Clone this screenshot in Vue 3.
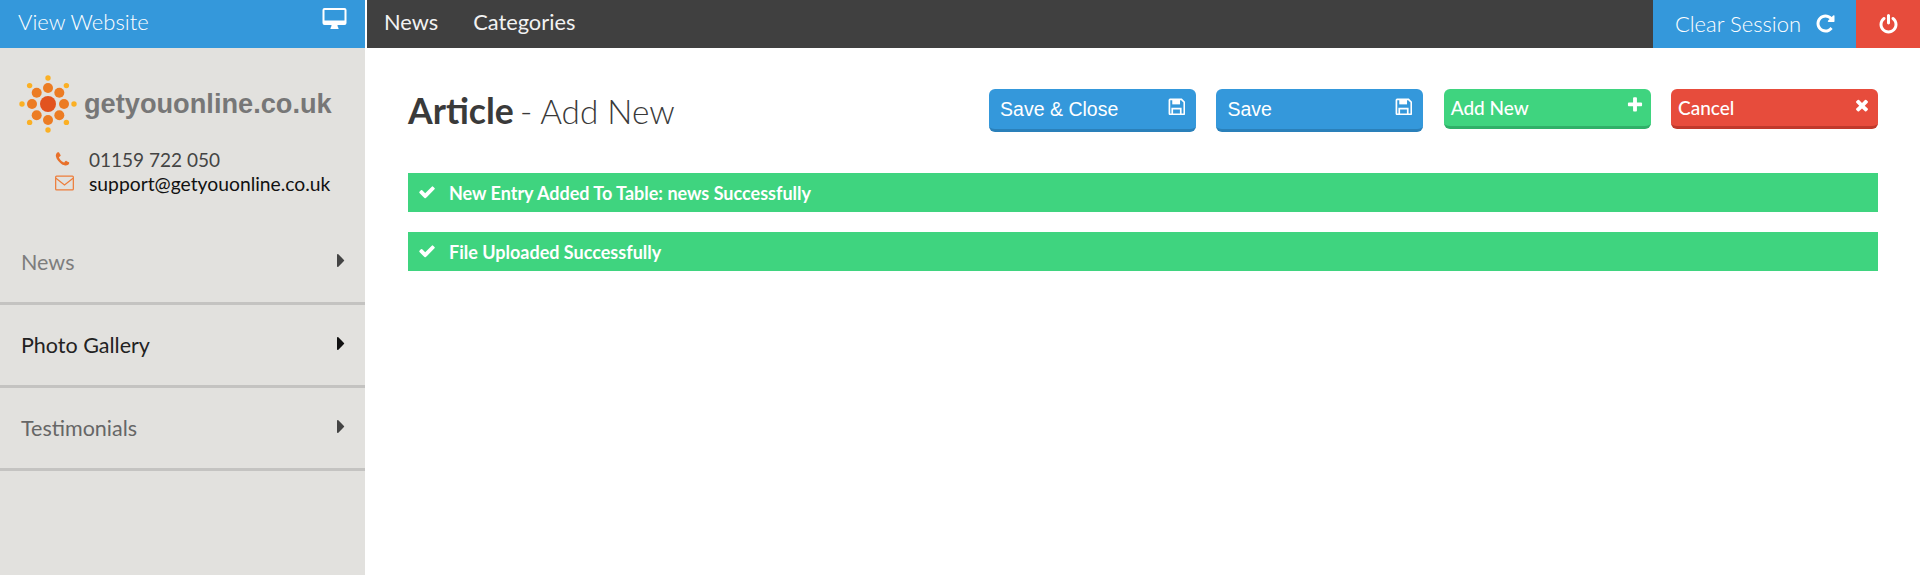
<script setup>
const dots = []
for (let i = 0; i < 8; i++) {
  const a = (i * Math.PI) / 4
  dots.push({ cx: 40 + 16 * Math.cos(a), cy: 40 + 16 * Math.sin(a), r: 5, fill: '#ec7c24' })
  dots.push({ cx: 40 + 26 * Math.cos(a), cy: 40 + 26 * Math.sin(a), r: 2.7, fill: '#fbb024' })
}
const menu = [
  { label: 'News', tone: 'muted' },
  { label: 'Photo Gallery', tone: 'strong' },
  { label: 'Testimonials', tone: 'mid' }
]
const alerts = ['New Entry Added To Table: news Successfully', 'File Uploaded Successfully']
const save = 'M3 2h16l4 4v16a1 1 0 0 1-1 1H3a1 1 0 0 1-1-1V3a1 1 0 0 1 1-1Z'
</script>

<template>
  <div class="page">
    <header class="top">
      <a class="view">
        <span>View Website</span>
        <svg class="desk" viewBox="0 0 24 21"><path fill="#fff" fill-rule="evenodd" d="M2 0h20a2 2 0 0 1 2 2v13a2 2 0 0 1-2 2h-7c0 1.500.5 2.300 1 3v1H8v-1c.5-.7 1-1.500 1-3H2a2 2 0 0 1-2-2V2a2 2 0 0 1 2-2Zm0 2v10.500h20V2H2Z"/></svg>
      </a>
      <nav class="nav">
        <a>News</a>
        <a>Categories</a>
      </nav>
      <a class="clear">
        <span>Clear Session</span>
        <svg class="ic20" viewBox="0 0 1792 1792"><path fill="#fff" d="M1664 256v448q0 26-19 45t-45 19h-448q-42 0-59-40-17-39 14-69l138-138q-148-137-349-137-104 0-198.500 40.500t-163.500 109.500-109.500 163.500-40.500 198.500 40.500 198.500 109.500 163.500 163.500 109.500 198.500 40.500q119 0 225-52t179-147q7-10 23-12 15 0 25 9l137 138q9 8 9.500 20.500t-7.500 22.500q-109 132-264 204.500t-327 72.500q-156 0-298-61t-245-164-164-245-61-298 61-298 164-245 245-164 298-61q147 0 284.500 55.500t244.500 156.500l130-129q29-31 70-14 39 17 39 59z"/></svg>
      </a>
      <a class="power">
        <svg class="ic20" viewBox="0 0 1792 1792"><path fill="#fff" d="M1664 896q0 156-61 298t-164 245-245 164-298 61-298-61-245-164-164-245-61-298q0-182 80.500-343t226.500-270q43-32 95.500-25t83.500 50q32 42 24.500 94.500t-49.500 84.500q-98 74-151.500 181t-53.500 228q0 104 40.500 198.500t109.500 163.500 163.500 109.500 198.500 40.500 198.500-40.500 163.500-109.500 109.500-163.500 40.500-198.500q0-121-53.500-228t-151.500-181q-42-32-49.500-84.500t24.500-94.500q31-43 84-50t95 25q146 109 226.500 270t80.500 343zm-640-768v640q0 52-38 90t-90 38-90-38-38-90v-640q0-52 38-90t90-38 90 38 38 90z"/></svg>
      </a>
    </header>

    <div class="body">
      <aside class="side">
        <div class="logo">
          <svg class="sun" viewBox="0 0 80 80">
            <circle cx="40" cy="40" r="8" fill="#e2531f" />
            <circle v-for="(d, i) in dots" :key="i" :cx="d.cx" :cy="d.cy" :r="d.r" :fill="d.fill" />
          </svg>
          <span class="brand">getyouonline.co.uk</span>
        </div>
        <div class="contact">
          <div class="line">
            <svg class="phone" viewBox="0 0 1792 1792"><path fill="#e8702a" d="M1600 1240q0 27-10 70.500t-21 68.500q-21 50-122 106-94 51-186 51-27 0-53-3.500t-57.500-12.500-47-14.500-55.500-20.500-49-18q-98-35-175-83-127-79-264-216t-216-264q-48-77-83-175-3-9-18-49t-20.500-55.500-14.500-47-12.500-57.500-3.500-53q0-92 51-186 56-101 106-122 25-11 68.500-21t70.500-10q14 0 21 3 18 6 53 76 11 19 30 54t35 63.500 31 53.500q3 4 17.500 25t21.500 35.500 7 28.500q0 20-28.500 50t-62 55-62 53-28.500 46q0 9 5 22.500t8.500 20.500 14 24 11.500 19q76 137 174 235t235 174q2 1 19 11.500t24 14 20.500 8.500 22.500 5q18 0 46-28.500t53-62 55-62 50-28.500q14 0 28.500 7t35.500 21.500 25 17.500q25 15 53.500 31t63.500 35 54 30q70 35 76 53 3 7 3 21z"/></svg>
            <span class="tel">01159 722 050</span>
          </div>
          <div class="line">
            <svg class="env" viewBox="0 0 20 16"><rect x=".7" y=".7" width="18.600" height="14.600" rx="1" fill="none" stroke="#ed7d3a" stroke-width="1.300"/><path d="M1 3l9 7 9-7" fill="none" stroke="#ed7d3a" stroke-width="1.300"/></svg>
            <span class="mail">support@getyouonline.co.uk</span>
          </div>
        </div>
        <ul class="menu">
          <li v-for="m in menu" :key="m.label" :class="['item', m.tone]">
            <span>{{ m.label }}</span>
            <svg class="caret" viewBox="576 384 640 1024"><path fill="currentColor" d="M1152 896q0 26-19 45l-448 448q-19 19-45 19t-45-19-19-45v-896q0-26 19-45t45-19 45 19l448 448q19 19 19 45z"/></svg>
          </li>
        </ul>
      </aside>

      <main class="main">
        <div class="head">
          <h1 class="title"><b>Article</b> <span class="sub">- Add New</span></h1>
          <div class="actions">
            <button class="btn blue arial">
              <span>Save &amp; Close</span>
              <svg class="ic-save" viewBox="0 0 24 24"><path fill="none" stroke="#fff" stroke-width="2.400" :d="save"/><path fill="none" stroke="#fff" stroke-width="2.400" d="M6 23v-8h12v8"/><path fill="#fff" d="M6 2h11v7H6z"/></svg>
            </button>
            <button class="btn blue arial">
              <span>Save</span>
              <svg class="ic-save" viewBox="0 0 24 24"><path fill="none" stroke="#fff" stroke-width="2.400" :d="save"/><path fill="none" stroke="#fff" stroke-width="2.400" d="M6 23v-8h12v8"/><path fill="#fff" d="M6 2h11v7H6z"/></svg>
            </button>
            <button class="btn green lato">
              <span>Add New</span>
              <svg class="ic-small" viewBox="0 0 1792 1792"><path fill="#fff" d="M1600 736v192q0 40-28 68t-68 28h-416v416q0 40-28 68t-68 28h-192q-40 0-68-28t-28-68v-416h-416q-40 0-68-28t-28-68v-192q0-40 28-68t68-28h416v-416q0-40 28-68t68-28h192q40 0 68 28t28 68v416h416q40 0 68 28t28 68z"/></svg>
            </button>
            <button class="btn red lato">
              <span>Cancel</span>
              <svg class="ic-small" viewBox="0 0 1792 1792"><path fill="#fff" d="M1490 1322q0 40-28 68l-136 136q-28 28-68 28t-68-28l-294-294-294 294q-28 28-68 28t-68-28l-136-136q-28-28-28-68t28-68l294-294-294-294q-28-28-28-68t28-68l136-136q28-28 68-28t68 28l294 294 294-294q28-28 68-28t68 28l136 136q28 28 28 68t-28 68l-294 294 294 294q28 28 28 68z"/></svg>
            </button>
          </div>
        </div>
        <div class="alerts">
          <div v-for="a in alerts" :key="a" class="alert">
            <svg class="check" viewBox="0 0 1792 1792"><path fill="#fff" d="M1671 566q0 40-28 68l-724 724-136 136q-28 28-68 28t-68-28l-136-136-362-362q-28-28-28-68t28-68l136-136q28-28 68-28t68 28l294 295 656-657q28-28 68-28t68 28l136 136q28 28 28 68z"/></svg>
            <span>{{ a }}</span>
          </div>
        </div>
      </main>
    </div>
  </div>
</template>

<style>
html, body { margin: 0; background: #fff; }
</style>

<style scoped>
.page { display: flex; flex-direction: column; height: 575px; overflow: hidden; font-family: Lato, "Liberation Sans", sans-serif; }
.top { display: flex; height: 48px; flex: none; color: #fff; font-size: 22px; }
.view { width: 365px; margin-right: 2px; background: #3498db; display: flex; justify-content: space-between; align-items: center; padding: 0 18px 6px; box-sizing: border-box; font-weight: 300; }
.desk { width: 25px; height: 21px; margin-top: -6px; }
.nav { flex: 1; background: #404040; display: flex; align-items: center; gap: 35px; padding: 0 0 6px 17px; font-size: 21.800px; font-weight: 400; color: #f2f2f2; }
.clear { width: 203px; box-sizing: border-box; background: #3498db; display: flex; align-items: center; justify-content: center; gap: 14px; padding: 0 0 2px 2px; font-weight: 300; }
.power { width: 64px; background: #e74c3c; display: flex; align-items: center; justify-content: center; }
.ic20 { width: 21px; height: 21px; }
.body { flex: 1; display: flex; min-height: 0; }
.side { width: 365px; flex: none; background: #e2e1de; margin-right: 2px; }
.logo { display: flex; align-items: center; padding: 25px 0 0 8px; height: 62px; }
.sun { width: 80px; height: 80px; flex: none; margin: 0 -4px 0 0; }
.brand { font-family: "Liberation Sans", Arial, sans-serif; font-weight: 700; font-size: 27.200px; color: #777; }
.contact { padding: 12px 0 0 54px; }
.line { display: flex; align-items: center; height: 24px; }
.phone { width: 17px; height: 17px; margin-right: 18px; }
.env { width: 19px; height: 16px; margin: 0 15px 0 1px; }
.tel { font-size: 19px; color: #444; }
.mail { font-size: 19.300px; color: #111; }
.menu { list-style: none; margin: 27px 0 0; padding: 0; }
.item { height: 80px; border-bottom: 3px solid #c4c3c1; display: flex; align-items: center; justify-content: space-between; padding: 0 20px 0 21px; font-size: 21.500px; font-weight: 400; }
.item.muted { color: #7d7d7d; }
.item.strong { color: #222; }
.item.mid { color: #666; }
.item.muted .caret { color: #444; }
.item.strong .caret { color: #111; }
.item.mid .caret { color: #444; }
.caret { width: 8px; height: 13px; margin-top: -4px; }
.main { flex: 1; min-width: 0; padding: 41px 42px 0 41px; }
.head { display: flex; justify-content: space-between; align-items: flex-start; height: 84px; }
.title { margin: 0; font-size: 33.300px; line-height: 44px; font-weight: 300; color: #3a3a3a; }
.title b { font-weight: 700; font-size: 35.600px; }
.sub { margin-left: -3px; }
.actions { display: flex; gap: 20.300px; align-items: flex-start; }
.btn { width: 207px; border: 0; border-bottom: 3px solid; border-radius: 6px; padding: 0 11px; display: flex; justify-content: space-between; color: #fff; box-sizing: border-box; }
.arial { font-family: "Liberation Sans", Arial, sans-serif; font-size: 19.500px; }
.lato { font-family: Lato, sans-serif; font-size: 19px; font-weight: 500; padding: 0 7px; }
.blue { background: #3498db; border-color: #2a80ba; height: 43px; align-items: center; }
.green { background: #3fd47f; border-color: #2fb068; height: 40px; align-items: center; }
.red { background: #e74c3c; border-color: #c0392b; height: 40px; align-items: center; }
.ic-save { width: 17px; height: 17px; margin-top: -6px; }
.ic-small { width: 18px; height: 18px; margin-top: -6px; }
.alerts { display: flex; flex-direction: column; gap: 20px; }
.alert { height: 39px; background: #3fd47f; color: #fff; font-weight: 700; font-size: 18px; display: flex; align-items: center; padding-left: 10px; }
.check { width: 18px; height: 18px; margin-right: 13px; margin-top: -2px; }
</style>
